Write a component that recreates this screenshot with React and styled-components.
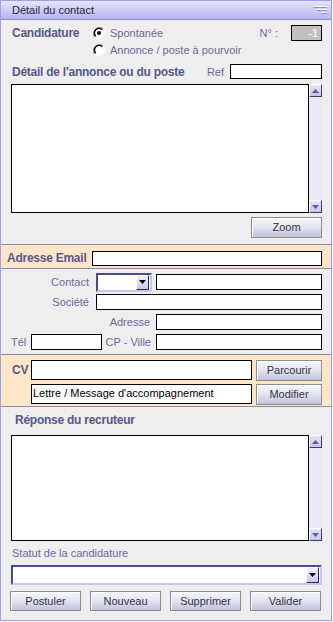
import React from "react";
import styled, { createGlobalStyle } from "styled-components";

const Global = createGlobalStyle`
  html, body { margin: 0; padding: 0; background: #f4f4f4; }
  body { font-family: "Liberation Sans", Arial, sans-serif; font-size: 11px; }
  * { box-sizing: border-box; }
`;

const Window = styled.div`
  width: 332px;
  height: 621px;
  border: 1px solid #a0a0e4;
  background: #eeeeee;
  display: flex;
  flex-direction: column;
`;

const TitleBar = styled.div`
  height: 19px;
  flex: none;
  display: flex;
  align-items: center;
  justify-content: space-between;
  padding: 0 4px 0 11px;
  background: linear-gradient(#e6e6fa, #b4b4f0);
  border-bottom: 1px solid #8a8ad0;
  color: #26264a;
  font-size: 11px;
`;

const Row = styled.div`
  display: flex;
  align-items: center;
  height: ${(p) => p.$h || 16}px;
  margin-top: ${(p) => p.$mt || 0}px;
  padding: 0 9px 0 10px;
  gap: ${(p) => p.$gap || 0}px;
`;

const BoldLabel = styled.span`
  font-weight: bold;
  color: #585888;
  font-size: 12px;
  letter-spacing: -0.25px;
  width: ${(p) => (p.$w ? p.$w + "px" : "auto")};
  padding-left: ${(p) => p.$pl || 0}px;
  margin-left: ${(p) => p.$ml || 0}px;
  flex: none;
  white-space: nowrap;
`;

const Label = styled.span`
  color: #6a6a9a;
  font-size: 11px;
  flex: none;
  white-space: nowrap;
  width: ${(p) => (p.$w ? p.$w + "px" : "auto")};
  text-align: ${(p) => p.$align || "left"};
  margin-right: ${(p) => p.$mr || 0}px;
  padding-left: ${(p) => p.$pl || 0}px;
`;

const Input = styled.div`
  height: ${(p) => p.$h || 16}px;
  width: ${(p) => (p.$w ? p.$w + "px" : "auto")};
  flex: ${(p) => (p.$w ? "none" : "1")};
  background: #fff;
  border: 1px solid #000;
  font-size: 11px;
  color: #000;
  padding: 1px 1px;
  line-height: 14px;
  white-space: nowrap;
`;

const NumBox = styled.div`
  width: 31px;
  height: 16px;
  background: #c0c0c0;
  border: 1px solid #000;
  color: #fff;
  font-size: 11px;
  text-align: right;
  padding-right: 3px;
  line-height: 14px;
`;

const RadioWrap = styled.label`
  display: flex;
  align-items: center;
  gap: 5px;
  color: #6a6a9a;
  font-size: 11px;
`;

const Spacer = styled.div`
  flex: ${(p) => (p.$w ? "none" : "1")};
  width: ${(p) => (p.$w ? p.$w + "px" : "auto")};
`;

const AreaWrap = styled.div`
  display: flex;
  height: ${(p) => p.$h}px;
  margin: ${(p) => p.$mt || 0}px 9px 0 10px;
`;

const TextBox = styled.div`
  flex: 1;
  background: #fff;
  border: 1px solid #000;
`;

const ScrollBar = styled.div`
  width: 13px;
  flex: none;
  background: #eaeaf6;
  display: flex;
  flex-direction: column;
  justify-content: space-between;
`;

const ScrollBtn = styled.div`
  width: 13px;
  height: 13px;
  background: linear-gradient(#e4e4fa, #c4c4ec);
  border: 1px solid;
  border-color: #fff #3c3c5c #3c3c5c #fff;
  display: flex;
  align-items: center;
  justify-content: center;
`;

const Button = styled.div`
  width: ${(p) => p.$w || 71}px;
  height: ${(p) => p.$h || 21}px;
  flex: none;
  margin-left: ${(p) => (p.$right ? "auto" : "0")};
  border: 1px solid #8c8c8c;
  box-shadow: inset 1px 1px 0 #fff;
  background: linear-gradient(#f6f6fc 0%, #e6e6f4 45%, #c2c2dc 100%);
  color: #333344;
  font-size: 11px;
  display: flex;
  align-items: center;
  justify-content: center;
`;

const Band = styled.div`
  background: #ffe6c8;
  border-top: 1px solid #8a8aa8;
  border-bottom: 1px solid #8a8aa8;
  margin-top: ${(p) => p.$mt || 0}px;
  padding: ${(p) => p.$pad || "0"};
  display: flex;
  flex-direction: column;
  gap: ${(p) => p.$gap || 0}px;
`;

const Section = styled.div`
  display: flex;
  flex-direction: column;
  padding: ${(p) => p.$pad || "0"};
`;

const Combo = styled.div`
  height: ${(p) => p.$h || 19}px;
  width: ${(p) => (p.$w ? p.$w + "px" : "auto")};
  flex: ${(p) => (p.$w ? "none" : "1")};
  margin-right: ${(p) => p.$mr || 0}px;
  background: #fff;
  border: 2px solid;
  border-color: #4a4a8e #c6c6ee #c6c6ee #4a4a8e;
  display: flex;
  justify-content: flex-end;
  align-items: stretch;
  padding: 0 1px 0 0;
`;

const DropBtn = styled.div`
  width: 13px;
  background: linear-gradient(#eeeefc, #c8c8ec);
  border: 1px solid;
  border-color: #fff #2c2c44 #2c2c44 #fff;
  display: flex;
  align-items: center;
  justify-content: center;
`;

const ButtonBar = styled.div`
  display: flex;
  gap: 9px;
  padding: 0 0 0 9px;
  margin-top: 6px;
`;

const MenuIcon = () => (
  <svg width="14" height="10" viewBox="0 0 14 10">
    <rect x="0" y="1" width="14" height="1" fill="#fff" />
    <rect x="0" y="2" width="14" height="1" fill="#8c8cd0" />
    <rect x="4" y="4" width="10" height="1" fill="#fff" />
    <rect x="4" y="5" width="10" height="1" fill="#8c8cd0" />
    <rect x="8" y="7" width="6" height="1" fill="#fff" />
    <rect x="8" y="8" width="6" height="1" fill="#8c8cd0" />
  </svg>
);

const Radio = ({ checked }) => (
  <svg width="12" height="12" viewBox="0 0 12 12">
    <path d="M10.2 1.8 A6 6 0 0 0 1.8 10.2" stroke="#808080" strokeWidth="1" fill="none" />
    <path d="M10.2 1.8 A6 6 0 0 1 1.8 10.2" stroke="#ffffff" strokeWidth="1" fill="none" />
    <circle cx="6" cy="6" r="4.5" fill="#fff" />
    <path d="M9.2 2.8 A4.5 4.5 0 0 0 2.8 9.2" stroke="#000" strokeWidth="1.4" fill="none" />
    {checked && <circle cx="6" cy="6" r="2" fill="#000" />}
  </svg>
);

const UpArrow = () => (
  <svg width="7" height="4" viewBox="0 0 7 4">
    <path d="M3.5 0 L7 4 L0 4 Z" fill="#5a5a9a" />
  </svg>
);
const DownArrow = ({ color = "#5a5a9a" }) => (
  <svg width="7" height="4" viewBox="0 0 7 4">
    <path d="M0 0 L7 0 L3.5 4 Z" fill={color} />
  </svg>
);

const TextArea = ({ h, mt }) => (
  <AreaWrap $h={h} $mt={mt}>
    <TextBox />
    <ScrollBar>
      <ScrollBtn>
        <UpArrow />
      </ScrollBtn>
      <ScrollBtn>
        <DownArrow />
      </ScrollBtn>
    </ScrollBar>
  </AreaWrap>
);

export default function App() {
  return (
    <>
      <Global />
      <Window>
        <TitleBar>
          <span>Détail du contact</span>
          <MenuIcon />
        </TitleBar>

        <Row $h={16} $mt={5}>
          <BoldLabel $w={82} $pl={1}>Candidature</BoldLabel>
          <RadioWrap>
            <Radio checked />
            Spontanée
          </RadioWrap>
          <Spacer />
          <Label $mr={13}>N° :</Label>
          <NumBox>-1</NumBox>
        </Row>
        <Row $h={14} $mt={2}>
          <Spacer $w={82} />
          <RadioWrap>
            <Radio />
            Annonce / poste à pourvoir
          </RadioWrap>
        </Row>
        <Row $h={15} $mt={7}>
          <BoldLabel $pl={1}>Détail de l'annonce ou du poste</BoldLabel>
          <Spacer />
          <Label $mr={6}>Ref</Label>
          <Input $w={92} $h={15} />
        </Row>
        <TextArea h={129} mt={5} />
        <Row $h={22} $mt={3}>
          <Button $right $h={21}>Zoom</Button>
        </Row>

        <Band $mt={6} $pad="5px 0 2px">
          <Row $h={16}>
            <BoldLabel $w={85} $ml={-4}>Adresse Email</BoldLabel>
            <Input $h={15} />
          </Row>
        </Band>

        <Section $pad="3px 0 2px">
          <Row $h={20}>
            <Label $w={78} $align="right" $mr={7}>Contact</Label>
            <Combo $w={56} $mr={4}>
              <DropBtn>
                <DownArrow color="#000" />
              </DropBtn>
            </Combo>
            <Input $h={16} />
          </Row>
          <Row $h={20}>
            <Label $w={78} $align="right" $mr={7}>Société</Label>
            <Input $h={16} />
          </Row>
          <Row $h={20}>
            <Label $w={139} $align="right" $mr={6}>Adresse</Label>
            <Input $h={16} />
          </Row>
          <Row $h={20}>
            <Label $w={20}>Tél</Label>
            <Input $w={71} $h={16} />
            <Label $w={49} $align="right" $mr={5}>CP - Ville</Label>
            <Input $h={16} />
          </Row>
        </Section>

        <Band $pad="5px 0 2px" $gap={4}>
          <Row $h={20}>
            <BoldLabel $w={20} $pl={1}>CV</BoldLabel>
            <Input $w={221} $h={20} />
            <Button $right $w={66} $h={21}>Parcourir</Button>
          </Row>
          <Row $h={20}>
            <Spacer $w={20} />
            <Input $w={221} $h={20}>Lettre / Message d'accompagnement</Input>
            <Button $right $w={66} $h={21}>Modifier</Button>
          </Row>
        </Band>

        <Row $h={14} $mt={6}>
          <BoldLabel $pl={4}>Réponse du recruteur</BoldLabel>
        </Row>
        <TextArea h={106} mt={8} />
        <Row $h={14} $mt={5}>
          <Label $pl={1}>Statut de la candidature</Label>
        </Row>
        <Row $h={20} $mt={5}>
          <Combo $h={20}>
            <DropBtn>
              <DownArrow color="#000" />
            </DropBtn>
          </Combo>
        </Row>
        <ButtonBar>
          <Button $h={20}>Postuler</Button>
          <Button $h={20}>Nouveau</Button>
          <Button $h={20}>Supprimer</Button>
          <Button $h={20}>Valider</Button>
        </ButtonBar>
      </Window>
    </>
  );
}
